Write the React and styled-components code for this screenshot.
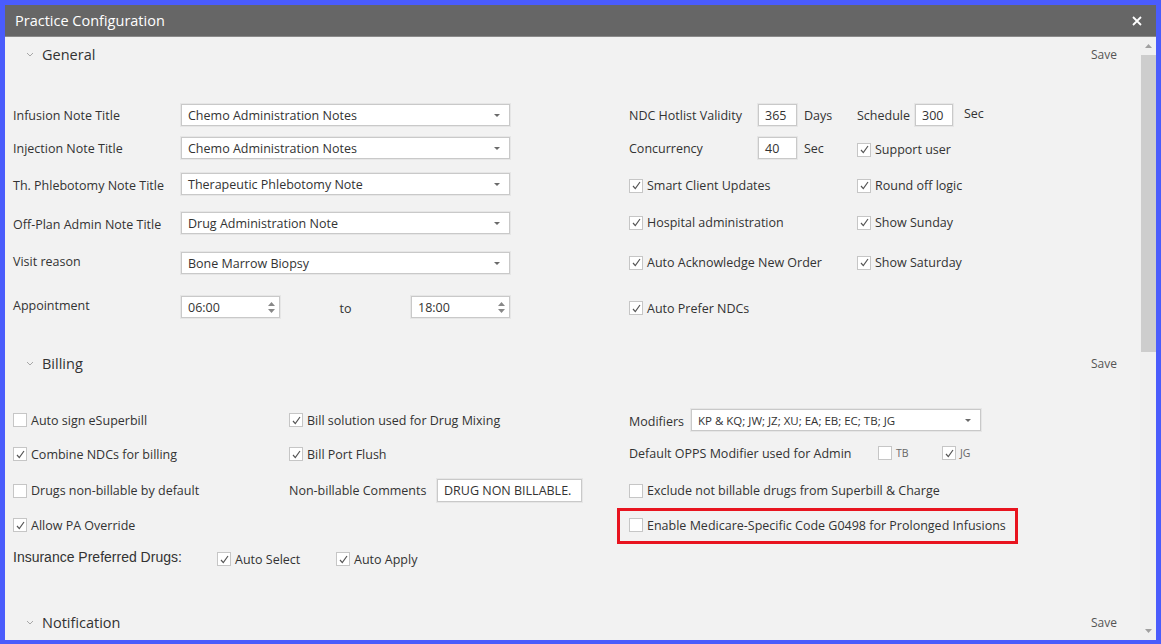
import React from 'react';
import styled, { createGlobalStyle } from 'styled-components';

const GlobalStyle = createGlobalStyle`
  html, body {
    margin: 0;
    padding: 0;
    background: #4a5cfc;
  }
  * { box-sizing: border-box; }
`;

const Frame = styled.div`
  width: 1161px;
  height: 644px;
  padding: 5px 5px 4px 5px;
  background: #4a5cfc;
  font-family: "Open Sans", "Noto Sans", sans-serif;
`;

const Window = styled.div`
  height: 100%;
  display: flex;
  flex-direction: column;
  background: #f2f2f2;
  overflow: hidden;
`;

const TitleBar = styled.div`
  height: 32px;
  flex: none;
  display: flex;
  align-items: center;
  justify-content: space-between;
  padding: 0 14px 0 10px;
  background: #666666;
  border-bottom: 1px solid #8a8a8a;
  color: #ffffff;
  font-size: 14.5px;
`;

const Body = styled.div`
  flex: 1;
  display: flex;
  min-height: 0;
`;

const Content = styled.div`
  flex: 1;
  padding: 0 23px 0 8px;
  overflow: hidden;
  color: #333;
  font-size: 12.5px;
`;

const ScrollTrack = styled.div`
  width: 16px;
  flex: none;
  display: flex;
  flex-direction: column;
  align-items: center;
  background: #f0f0f0;
`;

const ScrollArrow = styled.div`
  height: 18px;
  display: flex;
  align-items: center;
  justify-content: center;
`;

const ScrollThumb = styled.div`
  width: 15px;
  margin-left: 1px;
  height: 297px;
  background: #cdcdcd;
`;

const ScrollRest = styled.div`
  flex: 1;
`;

const SectionHeader = styled.div`
  height: 34px;
  display: flex;
  align-items: center;
  padding-left: 13px;
  margin-top: ${p => p.$gap || 0}px;
`;

const SectionTitle = styled.span`
  margin-left: 8px;
  font-size: 14.5px;
  color: #333;
  flex: 1;
`;

const SaveLink = styled.span`
  font-size: 12px;
  color: #555;
`;

const GeneralRow = styled.div`
  display: grid;
  grid-template-columns: 616px 1fr;
  align-items: center;
  height: 22px;
  margin-top: ${p => p.$gap}px;
`;

const BillingRow = styled.div`
  display: grid;
  grid-template-columns: 276px 340px 1fr;
  align-items: center;
  height: 22px;
  margin-top: ${p => p.$gap}px;
`;

const Cell = styled.div`
  display: flex;
  align-items: center;
  min-width: 0;
  white-space: nowrap;
`;

const Label = styled.span`
  width: ${p => (p.$w ? `${p.$w}px` : 'auto')};
  flex: none;
  margin-top: ${p => p.$dy || 0}px;
  margin-left: ${p => p.$ml || 0}px;
  color: #333;
`;

const RightSplit = styled.div`
  display: grid;
  grid-template-columns: 228px 1fr;
  align-items: center;
`;

const SelectBox = styled.div`
  width: ${p => p.$w}px;
  height: 22px;
  display: flex;
  align-items: center;
  justify-content: space-between;
  padding: 0 9px 0 6px;
  background: #fff;
  border: 1px solid #c9c9c9;
  box-shadow: 0 0 0 1px #e6e6e6;
  font-size: ${p => p.$fs || 12.5}px;
  color: #333;
`;

const TextBox = styled.div`
  width: ${p => p.$w}px;
  height: ${p => p.$h || 22}px;
  flex: none;
  display: flex;
  align-items: center;
  padding-left: 6px;
  background: #fff;
  border: 1px solid #c9c9c9;
  box-shadow: 0 0 0 1px #e6e6e6;
  color: #333;
`;

const TimePair = styled.div`
  width: 329px;
  display: flex;
  align-items: center;
  justify-content: space-between;
`;

const ToText = styled.span`
  margin-top: 3px;
`;

const Spinner = styled.div`
  display: flex;
  flex-direction: column;
  gap: 3px;
  margin-left: auto;
  margin-right: 4px;
`;

const CheckItem = styled.label`
  display: flex;
  align-items: center;
  gap: 4px;
  width: ${p => (p.$w ? `${p.$w}px` : 'auto')};
  flex: none;
  margin-top: ${p => p.$dy || 0}px;
  color: ${p => (p.$small ? '#666' : '#333')};
  font-size: ${p => (p.$small ? 10.5 : 12.5)}px;
  white-space: nowrap;
`;

const Box = styled.span`
  width: 14px;
  height: 14px;
  flex: none;
  display: flex;
  align-items: center;
  justify-content: center;
  background: #fff;
  border: 1px solid #c6c6c6;
`;

const Highlight = styled.div`
  display: flex;
  align-items: center;
  width: 401px;
  height: 36px;
  margin: -6px 0 -8px -12px;
  padding: 0 0 2px 9px;
  border: 3px solid #e8141f;
`;

const InsuranceRow = styled.div`
  display: flex;
  align-items: center;
  height: 22px;
  margin-top: 11px;
`;

const InsuranceLabel = styled.span`
  width: 204px;
  font-family: "Liberation Sans", Arial, sans-serif;
  font-size: 14px;
  color: #333;
  margin-top: -3px;
`;

const Caret = () => (
  <svg width="8" height="5" viewBox="0 0 8 5">
    <path d="M1 1 L4 4 L7 1" fill="none" stroke="#a8a8a8" strokeWidth="1" />
  </svg>
);

const DropArrow = () => (
  <svg width="6" height="3" viewBox="0 0 6 3">
    <path d="M0 0 H6 L3 3 Z" fill="#6a6a6a" />
  </svg>
);

const Tri = ({ up, color = '#777' }) => (
  <svg width="7" height="4" viewBox="0 0 7 4">
    <path d={up ? 'M0 4 H7 L3.5 0 Z' : 'M0 0 H7 L3.5 4 Z'} fill={color} />
  </svg>
);

const Check = ({ checked, children, ...rest }) => (
  <CheckItem {...rest}>
    <Box>
      {checked && (
        <svg width="11" height="11" viewBox="0 0 11 11">
          <path d="M2 6 L4.3 8.6 L9 2" fill="none" stroke="#555" strokeWidth="1.2" />
        </svg>
      )}
    </Box>
    {children}
  </CheckItem>
);

const Select = ({ w, fs, children }) => (
  <SelectBox $w={w} $fs={fs}>
    <span>{children}</span>
    <DropArrow />
  </SelectBox>
);

const TimeInput = ({ value }) => (
  <TextBox $w={99}>
    {value}
    <Spinner>
      <Tri up color="#888" />
      <Tri color="#888" />
    </Spinner>
  </TextBox>
);

const Section = ({ title, gap }) => (
  <SectionHeader $gap={gap}>
    <Caret />
    <SectionTitle>{title}</SectionTitle>
    <SaveLink>Save</SaveLink>
  </SectionHeader>
);

export default function App() {
  return (
    <>
      <GlobalStyle />
      <Frame>
        <Window>
          <TitleBar>
            <span>Practice Configuration</span>
            <svg width="10" height="10" viewBox="0 0 10 10">
              <path d="M1 1 L9 9 M9 1 L1 9" stroke="#fff" strokeWidth="1.8" />
            </svg>
          </TitleBar>
          <Body>
            <Content>
              <Section title="General" />

              <GeneralRow $gap={33}>
                <Cell>
                  <Label $w={168}>Infusion Note Title</Label>
                  <Select w={329}>Chemo Administration Notes</Select>
                </Cell>
                <RightSplit>
                  <Cell>
                    <Label $w={129}>NDC Hotlist Validity</Label>
                    <TextBox $w={39}>365</TextBox>
                    <Label $ml={7}>Days</Label>
                  </Cell>
                  <Cell>
                    <Label $w={58}>Schedule</Label>
                    <TextBox $w={38}>300</TextBox>
                    <Label $ml={11} $dy={-4}>Sec</Label>
                  </Cell>
                </RightSplit>
              </GeneralRow>

              <GeneralRow $gap={11}>
                <Cell>
                  <Label $w={168}>Injection Note Title</Label>
                  <Select w={329}>Chemo Administration Notes</Select>
                </Cell>
                <RightSplit>
                  <Cell>
                    <Label $w={129}>Concurrency</Label>
                    <TextBox $w={39}>40</TextBox>
                    <Label $ml={7}>Sec</Label>
                  </Cell>
                  <Check checked $dy={3}>Support user</Check>
                </RightSplit>
              </GeneralRow>

              <GeneralRow $gap={14}>
                <Cell>
                  <Label $w={168} $dy={2}>Th. Phlebotomy Note Title</Label>
                  <Select w={329}>Therapeutic Phlebotomy Note</Select>
                </Cell>
                <RightSplit>
                  <Check checked $dy={3}>Smart Client Updates</Check>
                  <Check checked $dy={3}>Round off logic</Check>
                </RightSplit>
              </GeneralRow>

              <GeneralRow $gap={17}>
                <Cell>
                  <Label $w={168} $dy={2}>Off-Plan Admin Note Title</Label>
                  <Select w={329}>Drug Administration Note</Select>
                </Cell>
                <RightSplit>
                  <Check checked $dy={-1}>Hospital administration</Check>
                  <Check checked $dy={-1}>Show Sunday</Check>
                </RightSplit>
              </GeneralRow>

              <GeneralRow $gap={18}>
                <Cell>
                  <Label $w={168} $dy={-4}>Visit reason</Label>
                  <Select w={329}>Bone Marrow Biopsy</Select>
                </Cell>
                <RightSplit>
                  <Check checked $dy={-1}>Auto Acknowledge New Order</Check>
                  <Check checked $dy={-1}>Show Saturday</Check>
                </RightSplit>
              </GeneralRow>

              <GeneralRow $gap={22}>
                <Cell>
                  <Label $w={168} $dy={-3}>Appointment</Label>
                  <TimePair>
                    <TimeInput value="06:00" />
                    <ToText>to</ToText>
                    <TimeInput value="18:00" />
                  </TimePair>
                </Cell>
                <RightSplit>
                  <Check checked $dy={2}>Auto Prefer NDCs</Check>
                </RightSplit>
              </GeneralRow>

              <Section title="Billing" gap={28} />

              <BillingRow $gap={29}>
                <Check>Auto sign eSuperbill</Check>
                <Check checked>Bill solution used for Drug Mixing</Check>
                <Cell>
                  <Label $w={62} $dy={2}>Modifiers</Label>
                  <Select w={290} fs={11.5}>KP &amp; KQ; JW; JZ; XU; EA; EB; EC; TB; JG</Select>
                </Cell>
              </BillingRow>

              <BillingRow $gap={12}>
                <Check checked>Combine NDCs for billing</Check>
                <Check checked>Bill Port Flush</Check>
                <Cell>
                  <Label $w={249} $dy={-2}>Default OPPS Modifier used for Admin</Label>
                  <Check $small $w={64} $dy={-2}>TB</Check>
                  <Check $small checked $dy={-2}>JG</Check>
                </Cell>
              </BillingRow>

              <BillingRow $gap={14}>
                <Check>Drugs non-billable by default</Check>
                <Cell>
                  <Label $w={148}>Non-billable Comments</Label>
                  <TextBox $w={145} $h={23}>DRUG NON BILLABLE.</TextBox>
                </Cell>
                <Check>Exclude not billable drugs from Superbill &amp; Charge</Check>
              </BillingRow>

              <BillingRow $gap={13}>
                <Check checked>Allow PA Override</Check>
                <Cell />
                <Cell>
                  <Highlight>
                    <Check>Enable Medicare-Specific Code G0498 for Prolonged Infusions</Check>
                  </Highlight>
                </Cell>
              </BillingRow>

              <InsuranceRow>
                <InsuranceLabel>Insurance Preferred Drugs:</InsuranceLabel>
                <Check checked $w={119} $dy={2}>Auto Select</Check>
                <Check checked $dy={2}>Auto Apply</Check>
              </InsuranceRow>

              <Section title="Notification" gap={36} />
            </Content>
            <ScrollTrack>
              <ScrollArrow>
                <Tri up color="#a0a0a0" />
              </ScrollArrow>
              <ScrollThumb />
              <ScrollRest />
              <ScrollArrow>
                <Tri color="#a0a0a0" />
              </ScrollArrow>
            </ScrollTrack>
          </Body>
        </Window>
      </Frame>
    </>
  );
}
